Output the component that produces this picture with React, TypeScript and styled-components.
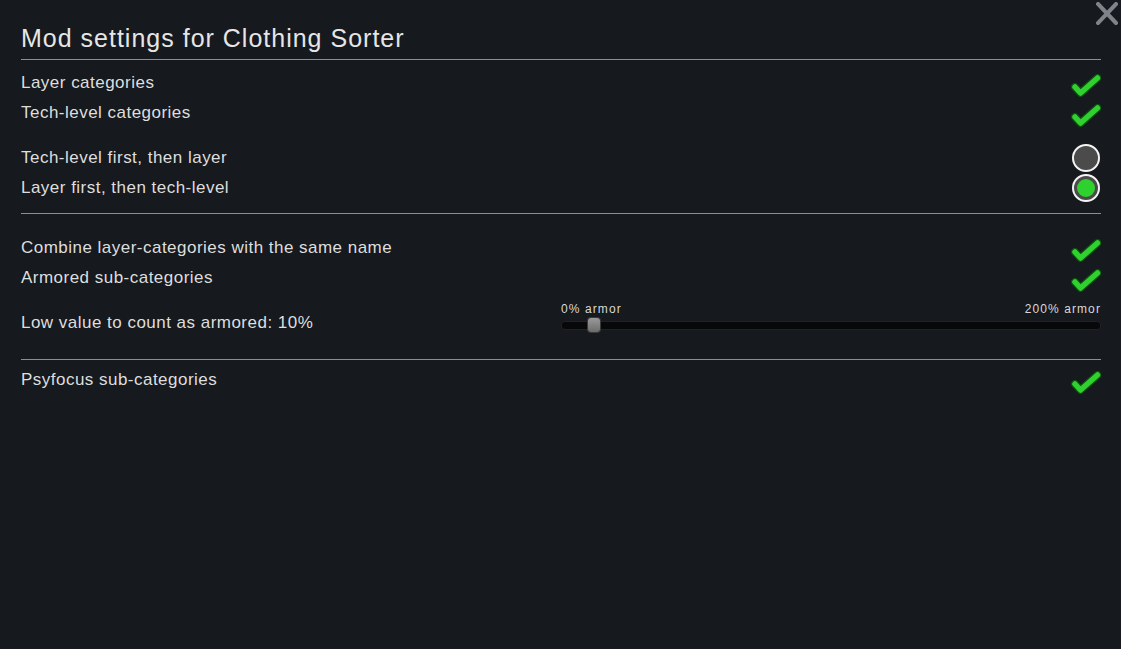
import React from "react";
import styled, { createGlobalStyle } from "styled-components";

const Global = createGlobalStyle`
  html, body { margin: 0; padding: 0; background: #16191d; }
  body { font-family: "Liberation Sans", Arial, sans-serif; color: #dcdcdc; }
`;

const Window = styled.div`
  position: relative;
  width: 1121px;
  height: 649px;
  box-sizing: border-box;
  padding: 23px 20px 0 21px;
  background: #16191d;
  overflow: hidden;
`;

const Close = styled.button`
  position: absolute;
  top: 2px;
  right: 3px;
  width: 22px;
  height: 23px;
  padding: 0;
  border: 0;
  background: transparent;
  display: flex;
`;

const Title = styled.h1`
  margin: 0;
  font-size: 25px;
  line-height: 30px;
  font-weight: normal;
  letter-spacing: 1px;
  color: #e6e6e6;
`;

const Divider = styled.div<{ $top: number; $bottom: number }>`
  height: 1px;
  background: #8e8e8e;
  margin-top: ${(p) => p.$top}px;
  margin-bottom: ${(p) => p.$bottom}px;
`;

const Row = styled.div<{ $gap?: number }>`
  display: flex;
  align-items: center;
  justify-content: space-between;
  height: 30px;
  margin-top: ${(p) => p.$gap ?? 0}px;
`;

const Label = styled.span`
  font-size: 17px;
  letter-spacing: 0.48px;
  color: #dedede;
`;

const CheckBox = styled.svg`
  width: 30px;
  height: 24px;
  margin-top: 5px;
  display: block;
`;

const Radio = styled.div<{ $on: boolean }>`
  width: 24px;
  height: 24px;
  margin-right: 1px;
  border: 2px solid #f4f4f4;
  border-radius: 50%;
  background: #4b4b4b;
  display: flex;
  align-items: center;
  justify-content: center;
  &::after {
    content: "";
    display: ${(p) => (p.$on ? "block" : "none")};
    width: 18px;
    height: 18px;
    border-radius: 50%;
    background: #2fd12f;
  }
`;

const SliderRow = styled.div`
  display: grid;
  grid-template-columns: 540px 540px;
  align-items: center;
  height: 30px;
  margin-top: 15px;
`;

const SliderBox = styled.div`
  display: flex;
  flex-direction: column;
  margin-top: -15px;
`;

const SliderLabels = styled.div`
  display: flex;
  justify-content: space-between;
  font-size: 12px;
  letter-spacing: 1.1px;
  color: #d8d8d8;
  line-height: 14px;
  height: 14px;
`;

const Track = styled.div`
  position: relative;
  margin-top: 5px;
  height: 9px;
  border-radius: 4px;
  background: #07080a;
  box-shadow: inset 0 0 0 1px #1f2226;
`;

const Thumb = styled.div`
  position: absolute;
  top: -3px;
  width: 12px;
  height: 14px;
  border-radius: 3px;
  background: linear-gradient(#9a9a9a, #6c6c6c);
  box-shadow: 0 0 0 1px #3a3a3a;
`;

const Check = () => (
  <CheckBox viewBox="0 0 30 24">
    <polyline points="4,13 9.5,19 26.5,4" fill="none" stroke="#0d4f0d" strokeWidth="8" strokeLinecap="round" strokeLinejoin="round" />
    <polyline points="4,13 9.5,19 26.5,4" fill="none" stroke="#2fd02f" strokeWidth="5.5" strokeLinecap="round" strokeLinejoin="round" />
  </CheckBox>
);

const thumbPct = 10 / 200;

export default function App() {
  return (
    <>
      <Global />
      <Window>
        <Close aria-label="close">
          <svg width="22" height="23" viewBox="0 0 22 23">
            <path d="M2 2 L20 21 M20 2 L2 21" stroke="#80848a" strokeWidth="4" strokeLinecap="square" />
          </svg>
        </Close>
        <Title>Mod settings for Clothing Sorter</Title>
        <Divider $top={6} $bottom={8} />
        <Row>
          <Label>Layer categories</Label>
          <Check />
        </Row>
        <Row>
          <Label>Tech-level categories</Label>
          <Check />
        </Row>
        <Row $gap={15}>
          <Label>Tech-level first, then layer</Label>
          <Radio $on={false} />
        </Row>
        <Row>
          <Label>Layer first, then tech-level</Label>
          <Radio $on />
        </Row>
        <Divider $top={10} $bottom={19} />
        <Row>
          <Label>Combine layer-categories with the same name</Label>
          <Check />
        </Row>
        <Row>
          <Label>Armored sub-categories</Label>
          <Check />
        </Row>
        <SliderRow>
          <Label>Low value to count as armored: 10%</Label>
          <SliderBox>
            <SliderLabels>
              <span>0% armor</span>
              <span>200% armor</span>
            </SliderLabels>
            <Track>
              <Thumb style={{ left: `${thumbPct * (540 - 12) + 1}px` }} />
            </Track>
          </SliderBox>
        </SliderRow>
        <Divider $top={21} $bottom={5} />
        <Row>
          <Label>Psyfocus sub-categories</Label>
          <Check />
        </Row>
      </Window>
    </>
  );
}
